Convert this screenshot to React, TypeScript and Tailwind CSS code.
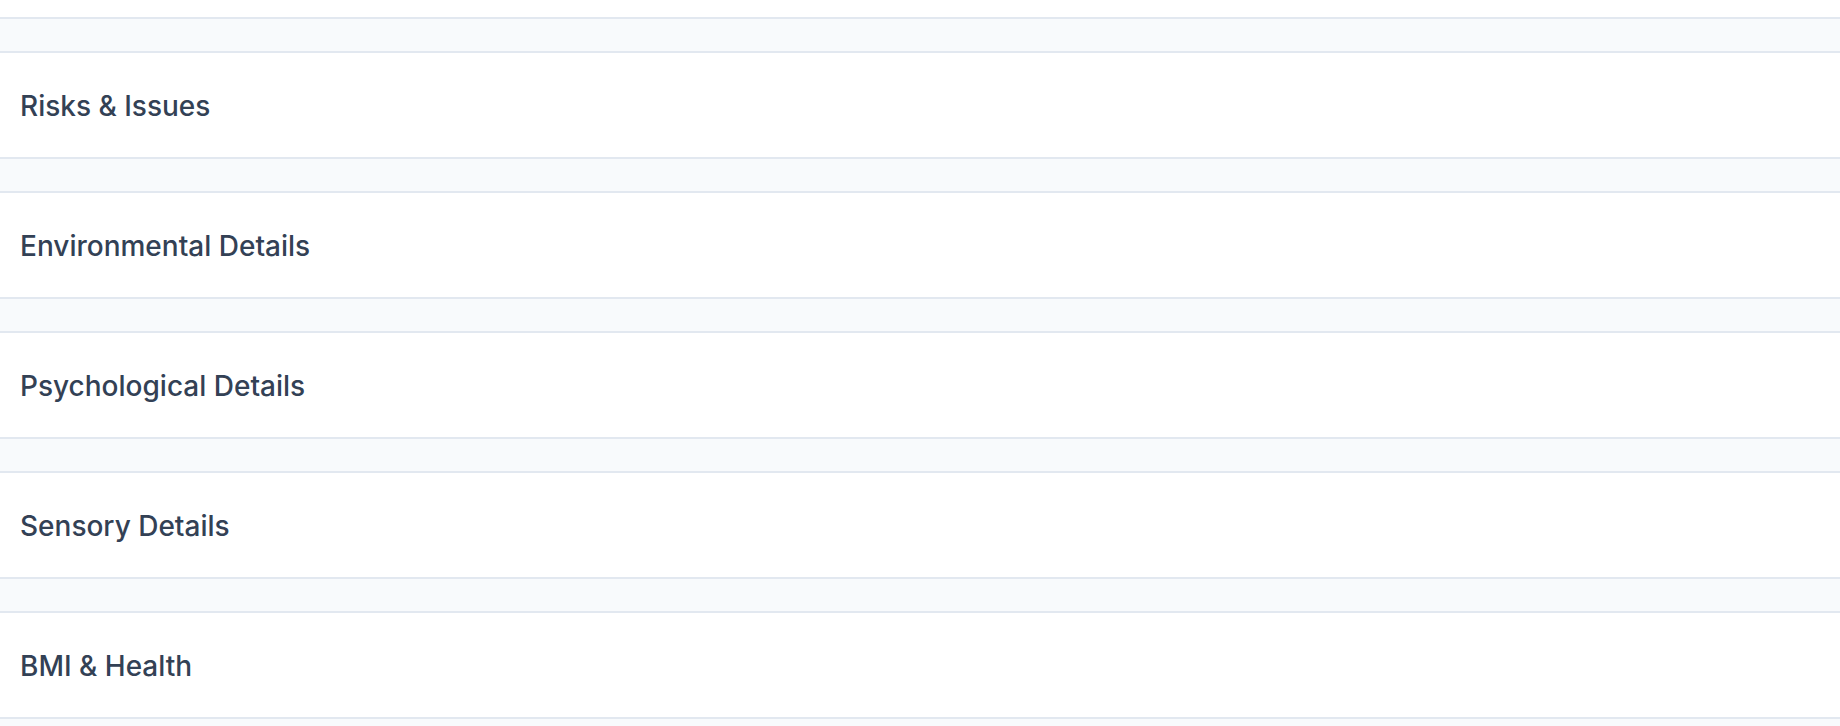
import React from 'react';

const sections = [
  'Risks & Issues',
  'Environmental Details',
  'Psychological Details',
  'Sensory Details',
  'BMI & Health',
];

export default function App() {
  return (
    <div className="min-h-screen bg-[#f8fafc] font-['Inter',sans-serif]">
      <div className="h-[19px] bg-white border-b-2 border-[#e2e8f0]" />
      {sections.map((title) => (
        <div key={title} className="mt-[32px]">
          <div className="h-[108px] bg-white border-y-2 border-[#e2e8f0] flex items-center px-[20px] pt-[2px]">
            <h3 className="text-[28px] font-medium text-[#334155] leading-none">{title}</h3>
          </div>
        </div>
      ))}
    </div>
  );
}
